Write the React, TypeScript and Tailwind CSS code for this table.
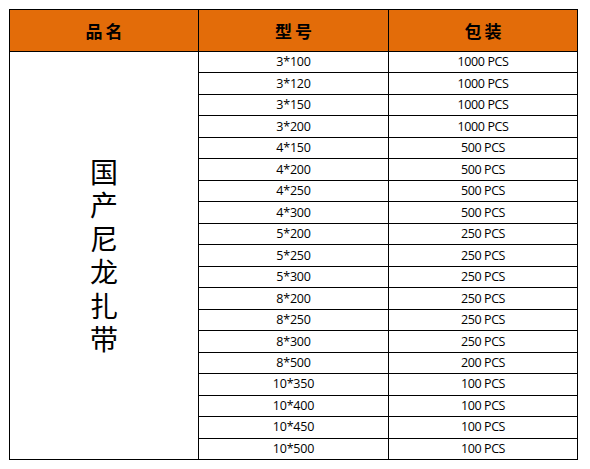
const rows = [
  ['3*100', '1000 PCS'],
  ['3*120', '1000 PCS'],
  ['3*150', '1000 PCS'],
  ['3*200', '1000 PCS'],
  ['4*150', '500 PCS'],
  ['4*200', '500 PCS'],
  ['4*250', '500 PCS'],
  ['4*300', '500 PCS'],
  ['5*200', '250 PCS'],
  ['5*250', '250 PCS'],
  ['5*300', '250 PCS'],
  ['8*200', '250 PCS'],
  ['8*250', '250 PCS'],
  ['8*300', '250 PCS'],
  ['8*500', '200 PCS'],
  ['10*350', '100 PCS'],
  ['10*400', '100 PCS'],
  ['10*450', '100 PCS'],
  ['10*500', '100 PCS'],
];

const headers = ['品名', '型号', '包装'];

export default function App() {
  return (
    <div className="w-[590px] h-[469px] bg-white pt-[9px] pl-[9px]">
      <div className="grid grid-cols-[189px_190px_189px] grid-rows-[42px_repeat(19,minmax(0,1fr))] w-[569px] h-[451px] border-l border-t border-black">
        {/* Header */}
        {headers.map((h) => (
          <div
            key={h}
            className="flex items-center justify-center bg-[#e36c09] border-r border-b border-black text-[17px] font-bold tracking-[3px] pl-[3px] text-black"
            style={{ fontFamily: '"Noto Sans CJK SC", sans-serif' }}
          >
            {h}
          </div>
        ))}

        {/* Product name, spans all rows */}
        <div className="row-span-19 flex items-center justify-center border-r border-b border-black">
          <div
            className="[writing-mode:vertical-rl] text-[28px] leading-[28px] tracking-[5.5px] pt-[5.5px] text-black"
            style={{ fontFamily: '"Noto Sans CJK SC", serif' }}
          >
            国产尼龙扎带
          </div>
        </div>

        {rows.map(([size, pack], i) => (
          <div key={i} className="contents">
            <div className="flex items-center justify-center pt-[1px] border-r border-b border-black font-['Open_Sans',sans-serif] text-[12.5px] tracking-[-0.2px] text-black">
              {size}
            </div>
            <div className="flex items-center justify-center pt-[1px] border-r border-b border-black font-['Open_Sans',sans-serif] text-[12.5px] tracking-[-0.4px] text-black">
              {pack}
            </div>
          </div>
        ))}
      </div>
    </div>
  );
}
